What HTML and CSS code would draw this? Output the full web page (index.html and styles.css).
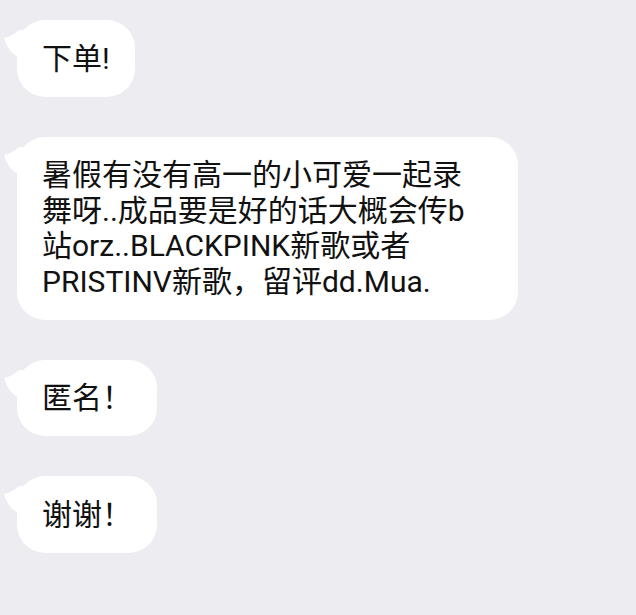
FILE: index.html
```html
<!DOCTYPE html>
<html lang="zh-CN">
<head>
<meta charset="utf-8">
<title>Chat</title>
<link rel="stylesheet" href="styles.css">
</head>
<body>
<div class="chat">
  <div class="bubble">
    <svg class="tail" viewBox="0 0 24 28" width="24" height="28"><path d="M1 8 Q9 6.5 16 0 L24 0 L24 28 L17 28 Q5 23 1 8 Z"/></svg>
    <span class="text">下单!</span>
  </div>
  <div class="bubble bubble-wide">
    <svg class="tail" viewBox="0 0 24 28" width="24" height="28"><path d="M1 8 Q9 6.5 16 0 L24 0 L24 28 L17 28 Q5 23 1 8 Z"/></svg>
    <span class="text">暑假有没有高一的小可爱一起录<br>舞呀..成品要是好的话大概会传b<br>站orz..BLACKPINK新歌或者<br>PRISTINV新歌，留评dd.Mua.</span>
  </div>
  <div class="bubble">
    <svg class="tail" viewBox="0 0 24 28" width="24" height="28"><path d="M1 8 Q9 6.5 16 0 L24 0 L24 28 L17 28 Q5 23 1 8 Z"/></svg>
    <span class="text">匿名！</span>
  </div>
  <div class="bubble">
    <svg class="tail" viewBox="0 0 24 28" width="24" height="28"><path d="M1 8 Q9 6.5 16 0 L24 0 L24 28 L17 28 Q5 23 1 8 Z"/></svg>
    <span class="text">谢谢！</span>
  </div>
</div>
</body>
</html>
```
FILE: styles.css
```css
html, body {
  margin: 0;
  padding: 0;
  background: #ececf1;
}

body {
  width: 636px;
  height: 615px;
  overflow: hidden;
  font-family: Roboto, "Noto Sans CJK SC", sans-serif;
  color: #111;
}

.chat {
  display: flex;
  flex-direction: column;
  align-items: flex-start;
  gap: 40px;
  padding: 20px 0 0 17px;
}

.bubble {
  position: relative;
  background: #fff;
  border-radius: 28px;
  padding: 20.5px 25px;
  font-size: 30px;
  line-height: 35.5px;
}

.bubble-wide {
  box-sizing: border-box;
  width: 501px;
}

.tail {
  position: absolute;
  left: -14px;
  top: 10px;
  fill: #fff;
  display: block;
}

.text {
  position: relative;
}
```
